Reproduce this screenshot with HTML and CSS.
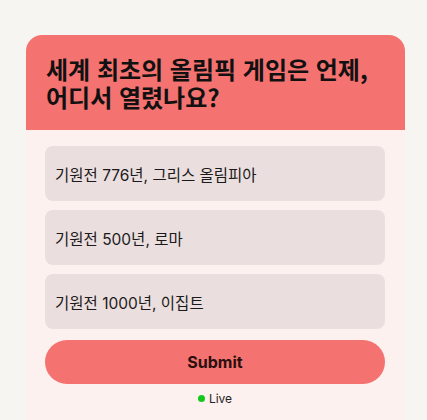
FILE: index.html
```html
<!DOCTYPE html>
<html lang="ko">
<head>
<meta charset="utf-8">
<link rel="stylesheet" href="styles.css">
</head>
<body>
<div class="card">
  <div class="card-head">
    <h1 class="title">세계 최초의 올림픽 게임은 언제, 어디서 열렸나요?</h1>
  </div>
  <div class="card-body">
    <div class="options">
      <div class="option">기원전 776년, 그리스 올림피아</div>
      <div class="option">기원전 500년, 로마</div>
      <div class="option">기원전 1000년, 이집트</div>
    </div>
    <button class="submit">Submit</button>
    <div class="live"><span class="dot"></span>Live</div>
  </div>
</div>
</body>
</html>
```
FILE: styles.css
```css
html, body {
  margin: 0;
  padding: 0;
}
body {
  background: #f7f5f2;
  font-family: Inter, "Noto Sans CJK KR", sans-serif;
  color: #1a1a1a;
  padding: 35px 22px 0 26px;
  height: 420px;
  box-sizing: border-box;
  overflow: hidden;
}
.card {
  width: 379px;
  border-radius: 16px;
  overflow: hidden;
  background: #fdf1f0;
  height: 400px;
}
.card-head {
  background: #f47270;
  padding: 20px 20px 19px 20px;
}
.title {
  margin: 0;
  font-family: "Noto Sans CJK KR", sans-serif;
  font-size: 24px;
  font-weight: 700;
  line-height: 28px;
  color: #111;
  word-break: keep-all;
}
.card-body {
  padding: 16px 20px 0 19px;
  display: flex;
  flex-direction: column;
}
.options {
  display: flex;
  flex-direction: column;
  gap: 9px;
}
.option {
  background: #ebdede;
  border-radius: 8px;
  height: 55px;
  display: flex;
  align-items: center;
  padding: 0 10px;
  font-size: 15.5px;
  color: #1a1a1a;
  font-family: Inter, "Noto Sans CJK KR", sans-serif;
}
.submit {
  margin-top: 11px;
  height: 44px;
  border: none;
  border-radius: 22px;
  background: #f47270;
  font-family: Inter, "Noto Sans CJK KR", sans-serif;
  font-size: 16px;
  font-weight: 700;
  color: #2a0f0f;
  cursor: pointer;
}
.live {
  margin-top: 7px;
  display: flex;
  align-items: center;
  justify-content: center;
  gap: 4px;
  font-size: 12px;
  color: #222;
}
.dot {
  width: 7px;
  height: 7px;
  border-radius: 50%;
  background: #13c81a;
}
```
